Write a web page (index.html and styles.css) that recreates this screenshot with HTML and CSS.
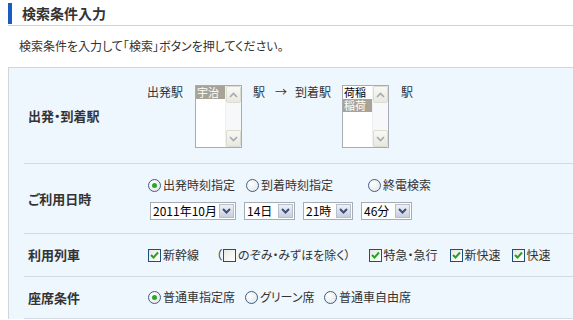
FILE: index.html
```html
<!doctype html>
<html>
<head>
<meta charset="utf-8">
<title>検索条件入力</title>
<link rel="stylesheet" href="styles.css">
</head>
<body>
<div class="page">
	<div class="head"><h1>検索条件入力</h1></div>
	<p class="lead">検索条件を入力して「検索」ボタンを押してください。</p>

	<div class="cond">
		<!-- 駅 -->
		<div class="row r1">
			<div class="lbl">出発・到着駅</div>
			<div class="val st">
				<span class="w1">出発駅</span>
				<div class="lst">
					<ul><li class="on">宇治</li></ul>
					<div class="sb">
						<span class="sbtn"><svg width="9" height="6" viewBox="0 0 9 6"><path d="M1 5 L4.5 1.5 L8 5" fill="none" stroke="#a3aab3" stroke-width="1.6"/></svg></span>
						<span class="sbtn"><svg width="9" height="6" viewBox="0 0 9 6"><path d="M1 1 L4.5 4.5 L8 1" fill="none" stroke="#a3aab3" stroke-width="1.6"/></svg></span>
					</div>
				</div>
				<span class="w2">駅</span>
				<span class="w3">→</span>
				<span class="w4">到着駅</span>
				<div class="lst">
					<ul><li>荷稲</li><li class="on">稲荷</li></ul>
					<div class="sb">
						<span class="sbtn"><svg width="9" height="6" viewBox="0 0 9 6"><path d="M1 5 L4.5 1.5 L8 5" fill="none" stroke="#a3aab3" stroke-width="1.6"/></svg></span>
						<span class="sbtn"><svg width="9" height="6" viewBox="0 0 9 6"><path d="M1 1 L4.5 4.5 L8 1" fill="none" stroke="#a3aab3" stroke-width="1.6"/></svg></span>
					</div>
				</div>
				<span class="w5">駅</span>
			</div>
		</div>

		<!-- 日時 -->
		<div class="row r2">
			<div class="lbl">ご利用日時</div>
			<div class="val">
				<div class="opts">
					<label class="opt o1"><span class="rd on"></span>出発時刻指定</label>
					<label class="opt o2"><span class="rd"></span>到着時刻指定</label>
					<label class="opt"><span class="rd"></span>終電検索</label>
				</div>
				<div class="sels">
					<span class="dd" style="width:86px"><span class="dv">2011年10月</span><span class="db"><svg width="9" height="6" viewBox="0 0 9 6"><path d="M1 1 L4.5 4.5 L8 1" fill="none" stroke="#3d4f78" stroke-width="2"/></svg></span></span>
					<span class="dd" style="width:51px"><span class="dv">14日</span><span class="db"><svg width="9" height="6" viewBox="0 0 9 6"><path d="M1 1 L4.5 4.5 L8 1" fill="none" stroke="#3d4f78" stroke-width="2"/></svg></span></span>
					<span class="dd" style="width:50px"><span class="dv">21時</span><span class="db"><svg width="9" height="6" viewBox="0 0 9 6"><path d="M1 1 L4.5 4.5 L8 1" fill="none" stroke="#3d4f78" stroke-width="2"/></svg></span></span>
					<span class="dd" style="width:51px"><span class="dv">46分</span><span class="db"><svg width="9" height="6" viewBox="0 0 9 6"><path d="M1 1 L4.5 4.5 L8 1" fill="none" stroke="#3d4f78" stroke-width="2"/></svg></span></span>
				</div>
			</div>
		</div>

		<!-- 列車 -->
		<div class="row r3">
			<div class="lbl">利用列車</div>
			<div class="val opts">
				<label class="opt c1"><span class="cb on"><svg width="9" height="8" viewBox="0 0 9 8"><path d="M1 4 L3.5 6.5 L8 1.5" fill="none" stroke="#22a322" stroke-width="2"/></svg></span>新幹線</label>
				<label class="opt c2">（<span class="cb"></span>のぞみ・みずほを除く）</label>
				<label class="opt c3"><span class="cb on"><svg width="9" height="8" viewBox="0 0 9 8"><path d="M1 4 L3.5 6.5 L8 1.5" fill="none" stroke="#22a322" stroke-width="2"/></svg></span>特急・急行</label>
				<label class="opt c4"><span class="cb on"><svg width="9" height="8" viewBox="0 0 9 8"><path d="M1 4 L3.5 6.5 L8 1.5" fill="none" stroke="#22a322" stroke-width="2"/></svg></span>新快速</label>
				<label class="opt"><span class="cb on"><svg width="9" height="8" viewBox="0 0 9 8"><path d="M1 4 L3.5 6.5 L8 1.5" fill="none" stroke="#22a322" stroke-width="2"/></svg></span>快速</label>
			</div>
		</div>

		<!-- 座席 -->
		<div class="row r4">
			<div class="lbl">座席条件</div>
			<div class="val opts">
				<label class="opt s1"><span class="rd on"></span>普通車指定席</label>
				<label class="opt s2"><span class="rd"></span>グリーン席</label>
				<label class="opt"><span class="rd"></span>普通車自由席</label>
			</div>
		</div>
	</div>
</div>
</body>
</html>
```

FILE: styles.css
```css
*{ margin:0; padding:0; }
body{
	font-family:"Noto Sans CJK JP","Noto Sans",sans-serif;
	font-size:12px;
	color:#333;
	background:#fff;
	overflow:hidden;
	font-feature-settings:"palt";
}
.page{ width:565px; padding:3px 0 0 8px; }

/* 見出し */
.head{ border-bottom:1px solid #ccd4da; padding-bottom:1px; }
.head h1{
	border-left:4px solid #1b5cbf;
	padding-left:10px;
	height:21px;
	font-size:14px;
	line-height:21px;
	color:#333;
}
.lead{ margin:13px 0 0 11px; line-height:14px; }

/* 条件ボックス */
.cond{
	margin-top:14px;
	border-top:1px solid #cfd6dc;
	border-left:1px solid #cfd6dc;
	background:#eef6fe;
}
.row{
	display:grid;
	grid-template-columns:123px auto;
	align-items:center;
	margin-left:15px;
	border-bottom:1px solid #d3dbe2;
}
.lbl{ padding-left:4px; font-size:13px; font-weight:bold; line-height:16px; }
.val{ line-height:14px; }

.r1 .val{ padding:17px 0 15px; }
.r2 .val{ padding:14px 0 13px; }
.r3 .val{ padding:14px 0 14px; }
.r4 .val{ padding:13px 0 14px; }

/* 駅リスト */
.st{ display:flex; align-items:flex-start; }
.w1{ margin-right:12px; }
.w2{ margin:0 10px 0 11px; }
.w3{ margin-right:8px; }
.w4{ margin-right:11px; }
.w5{ margin-left:12px; }
.lst{
	display:flex;
	width:45px;
	height:61px;
	border:1px solid #a5acb5;
	background:#fff;
}
.lst ul{ flex:1; list-style:none; }
.lst li{ height:13px; font-size:11px; line-height:13px; padding-left:1px; color:#000; }
.lst li.on{ background:#a8a398; color:#fff; }
.sb{
	width:15px;
	display:flex;
	flex-direction:column;
	justify-content:space-between;
	background:#f6f8fa;
	border-left:1px solid #eef0f3;
}
.sbtn{
	height:15px;
	display:flex;
	align-items:center;
	justify-content:center;
	background:linear-gradient(#f9f9f4,#e8e8df);
	border:1px solid #dcdcd2;
	border-radius:2px;
}

/* ラジオ・チェック */
.opts{ display:flex; align-items:center; }
.opt{ display:flex; align-items:center; white-space:nowrap; }
.o1{ width:98px; }
.o2{ width:122px; }
.c1{ margin-right:17px; }
.c2{ margin-right:17px; }
.c3{ margin-right:11px; }
.c4{ margin-right:10px; }
.s1{ width:97px; }
.s2{ width:79px; }

.rd{
	width:11px;
	height:11px;
	margin:0 2px 0 1px;
	border:1px solid #3f5f82;
	border-radius:50%;
	background:radial-gradient(circle at 35% 35%,#fff,#dfe3e8);
	display:flex;
	align-items:center;
	justify-content:center;
}
.rd.on::after{
	content:"";
	width:5px;
	height:5px;
	border-radius:50%;
	background:#2aa72a;
}
.cb{
	width:11px;
	height:11px;
	margin:0 2px 0 1px;
	border:1px solid #1c4f7e;
	background:linear-gradient(135deg,#e8e8e2,#fff);
	display:flex;
	align-items:center;
	justify-content:center;
}

/* プルダウン */
.sels{ display:flex; margin:10px 0 0 3px; }
.dd{
	display:flex;
	height:18px;
	margin-right:8px;
	border:1px solid #a5acb2;
	background:#fff;
	box-sizing:border-box;
	padding:1px;
}
.dv{ flex:1; line-height:14px; padding-left:1px; color:#000; }
.db{
	width:15px;
	display:flex;
	align-items:center;
	justify-content:center;
	background:linear-gradient(#eef1f6,#c8cfdc);
	border:1px solid #b6bfcd;
	box-sizing:border-box;
}
```
